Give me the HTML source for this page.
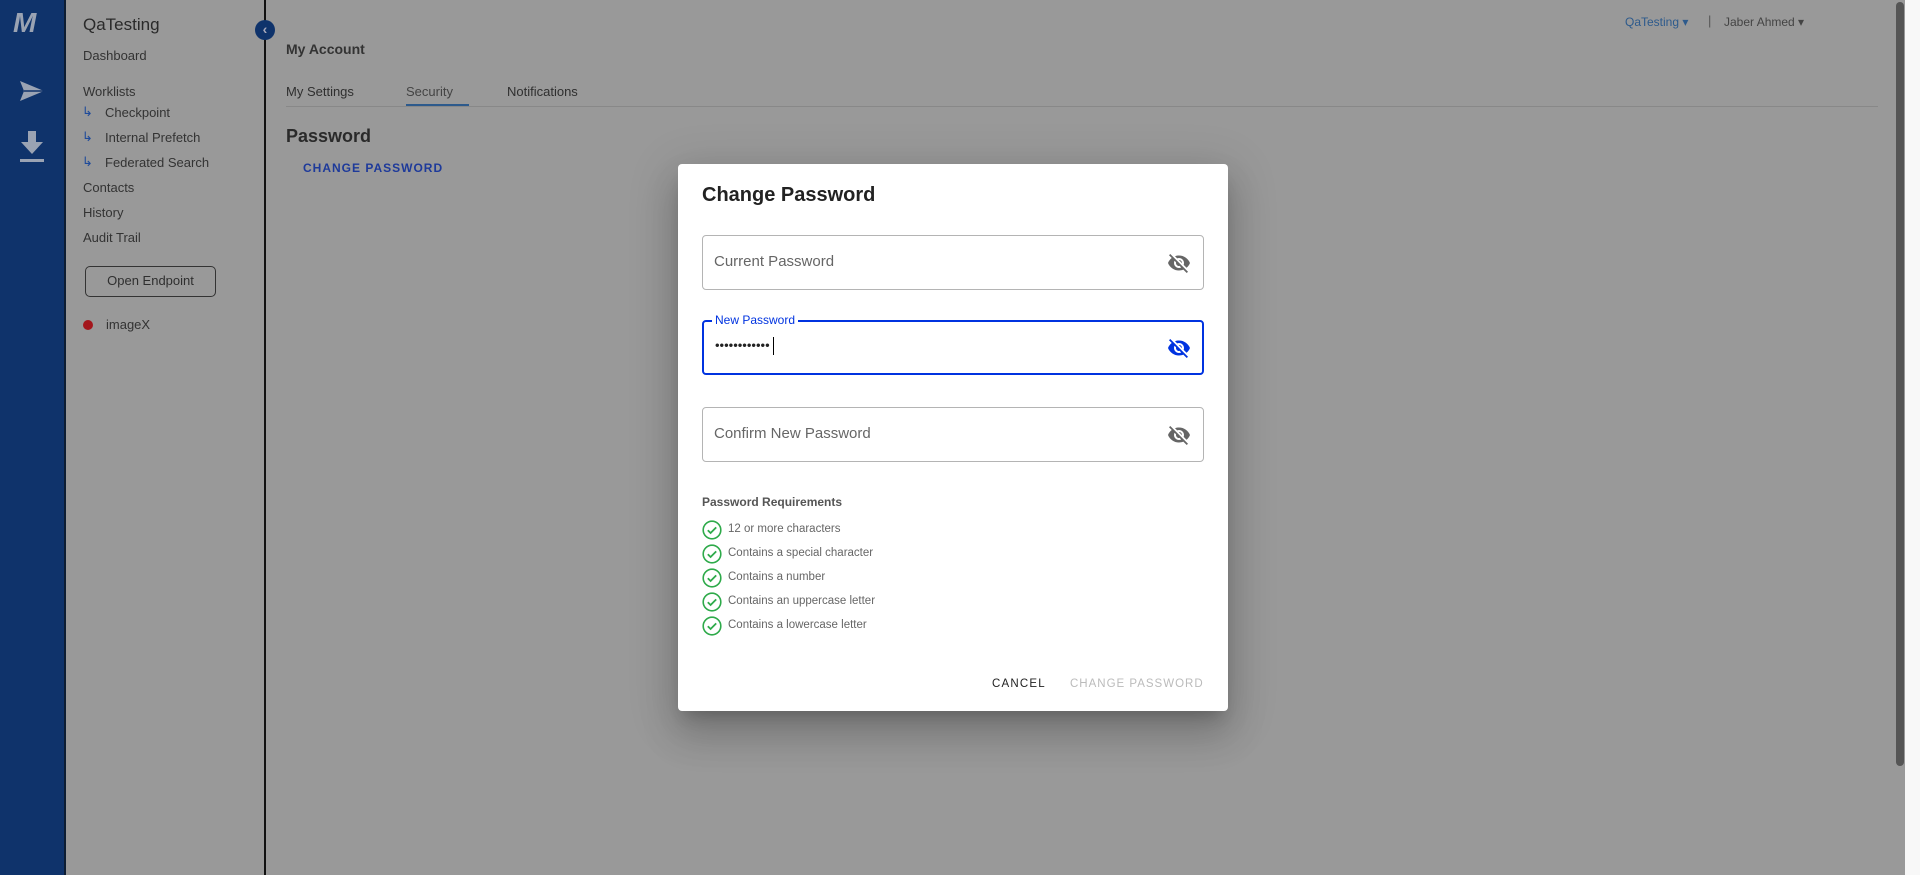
<!DOCTYPE html>
<html><head><meta charset="utf-8"><style>
*{margin:0;padding:0;box-sizing:border-box}
body{width:1920px;height:875px;overflow:hidden;background:#999;font-family:"Liberation Sans",sans-serif;position:relative}
.a{position:absolute;white-space:nowrap}
.nav{left:0;top:0;width:64px;height:875px;background:#0f336b}
.side{left:64px;top:0;width:202px;height:875px;background:#999;border-left:2px solid #0d1d33;border-right:2px solid #111}
.s{font-size:13px;color:#333;left:83px}
.sub{left:105px}
.arr{left:82px;color:#1e4a9a;font-size:13px}
.modal{left:678px;top:164px;width:550px;height:547px;background:#fff;border-radius:4px;box-shadow:0 11px 15px -7px rgba(0,0,0,.2),0 24px 38px 3px rgba(0,0,0,.14),0 9px 46px 8px rgba(0,0,0,.12)}
.f{left:24px;width:502px;height:55px;border:1px solid #b4b4b4;border-radius:4px}
.lab{left:11px;top:17px;font-size:15px;color:#666}
.eye{position:absolute;right:12px;top:15px;width:24px;height:24px}
.req{left:50px;font-size:11.5px;color:#666}
.chk{left:24px;width:20px;height:20px}
</style></head><body>
<div class="a nav"></div>
<div class="a" style="left:13px;top:7px;font-size:28px;font-weight:bold;font-style:italic;color:#9aa3b3;letter-spacing:-2px">M</div>
<svg class="a" style="left:19px;top:80px" width="26" height="22" viewBox="0 0 26 22"><path d="M1 1 L25 11 L1 21 L5 11 Z" fill="#9aa3b3"/><path d="M5 11h20" stroke="#0f336b" stroke-width="1.5"/></svg>
<svg class="a" style="left:19px;top:131px" width="26" height="32" viewBox="0 0 26 32"><path d="M9 0h8v11h7L13 23 2 11h7z" fill="#9aa3b3"/><rect x="1" y="28" width="24" height="3" fill="#9aa3b3"/></svg>
<div class="a side"></div>
<div class="a" style="left:83px;top:15px;font-size:17px;color:#2a2a2a">QaTesting</div>
<div class="a s" style="top:48px">Dashboard</div>
<div class="a s" style="top:84px">Worklists</div>
<div class="a arr" style="top:104px">↳</div><div class="a s sub" style="top:105px">Checkpoint</div>
<div class="a arr" style="top:129px">↳</div><div class="a s sub" style="top:130px">Internal Prefetch</div>
<div class="a arr" style="top:154px">↳</div><div class="a s sub" style="top:155px">Federated Search</div>
<div class="a s" style="top:180px">Contacts</div>
<div class="a s" style="top:205px">History</div>
<div class="a s" style="top:230px">Audit Trail</div>
<div class="a" style="left:85px;top:266px;width:131px;height:31px;border:1.5px solid #333;border-radius:5px;font-size:13px;color:#2f2f2f;text-align:center;line-height:28px">Open Endpoint</div>
<div class="a" style="left:83px;top:320px;width:10px;height:10px;border-radius:50%;background:#a3161c"></div>
<div class="a s" style="left:106px;top:317px">imageX</div>
<div class="a" style="left:255px;top:20px;width:20px;height:20px;border-radius:50%;background:#0f336b;color:#aab;font-size:14px;text-align:center;line-height:19px;font-weight:bold">‹</div>
<div class="a" style="left:286px;top:41px;font-size:14px;font-weight:bold;color:#333">My Account</div>
<div class="a" style="left:286px;top:84px;font-size:13px;color:#2f2f2f">My Settings</div>
<div class="a" style="left:406px;top:84px;font-size:13px;color:#444">Security</div>
<div class="a" style="left:507px;top:84px;font-size:13px;color:#2f2f2f">Notifications</div>
<div class="a" style="left:286px;top:106px;width:1592px;height:1px;background:#888"></div>
<div class="a" style="left:406px;top:104px;width:63px;height:2px;background:#2d5a8c"></div>
<div class="a" style="left:286px;top:126px;font-size:18px;font-weight:bold;color:#2a2a2a">Password</div>
<div class="a" style="left:303px;top:161px;font-size:12px;font-weight:bold;color:#1e3a9a;letter-spacing:1px">CHANGE PASSWORD</div>
<div class="a" style="left:1625px;top:15px;font-size:12px;color:#2d5a8c">QaTesting ▾</div>
<div class="a" style="left:1708px;top:13px;font-size:13px;color:#555">|</div>
<div class="a" style="left:1724px;top:15px;font-size:12px;color:#444">Jaber Ahmed ▾</div>
<div class="a" style="left:1896px;top:2px;width:8px;height:764px;background:#555;border-radius:4px"></div>
<div class="a" style="left:1905px;top:0;width:15px;height:875px;background:#f8f8f8"></div>

<div class="a modal">
<div class="a" style="left:24px;top:20px;font-size:20px;font-weight:bold;color:#222">Change Password</div>
<div class="a f" style="top:71px"><div class="a lab">Current Password</div>
<svg class="eye" viewBox="0 0 24 24"><path fill="#666" d="M12 7c2.76 0 5 2.24 5 5 0 .65-.13 1.26-.36 1.830l2.92 2.92c1.51-1.26 2.7-2.89 3.43-4.75-1.73-4.39-6-7.5-11-7.5-1.4 0-2.74.25-3.98.7l2.16 2.16C10.74 7.13 11.35 7 12 7zM2 4.27l2.28 2.28.46.46C3.08 8.3 1.78 10.02 1 12c1.73 4.39 6 7.5 11 7.5 1.55 0 3.03-.3 4.38-.84l.42.42L19.73 22 21 20.73 3.27 3 2 4.27zM7.53 9.8l1.55 1.55c-.05.21-.08.43-.08.65 0 1.66 1.34 3 3 3 .22 0 .44-.03.65-.08l1.55 1.55c-.67.33-1.41.53-2.2.53-2.76 0-5-2.24-5-5 0-.79.2-1.53.53-2.2zm4.31-.78l3.15 3.15.02-.16c0-1.66-1.34-3-3-3l-.17.01z"/></svg></div>
<div class="a f" style="top:156px;border:2px solid #0033e0">
<div class="a" style="left:8px;top:-9px;background:#fff;padding:0 3px;font-size:12px;color:#0033e0">New Password</div>
<div class="a" style="left:11px;top:15px;font-size:13px;color:#222;letter-spacing:0">••••••••••••<span style="display:inline-block;width:1px;height:18px;background:#000;vertical-align:middle;margin-left:3px"></span></div>
<svg class="eye" style="right:11px;top:14px" viewBox="0 0 24 24"><path fill="#0033e0" d="M12 7c2.76 0 5 2.24 5 5 0 .65-.13 1.26-.36 1.83l2.92 2.92c1.51-1.26 2.7-2.89 3.43-4.75-1.73-4.39-6-7.5-11-7.5-1.4 0-2.74.25-3.98.7l2.16 2.16C10.74 7.13 11.35 7 12 7zM2 4.27l2.28 2.28.46.46C3.08 8.3 1.78 10.02 1 12c1.73 4.39 6 7.5 11 7.5 1.55 0 3.03-.3 4.38-.84l.42.42L19.73 22 21 20.73 3.27 3 2 4.27zM7.53 9.8l1.55 1.55c-.05.21-.08.43-.08.65 0 1.66 1.34 3 3 3 .22 0 .44-.03.65-.08l1.55 1.55c-.67.33-1.41.53-2.2.53-2.76 0-5-2.24-5-5 0-.79.2-1.53.53-2.2zm4.31-.78l3.15 3.15.02-.16c0-1.66-1.34-3-3-3l-.17.01z"/></svg></div>
<div class="a f" style="top:243px"><div class="a lab">Confirm New Password</div>
<svg class="eye" viewBox="0 0 24 24"><path fill="#666" d="M12 7c2.76 0 5 2.24 5 5 0 .65-.13 1.26-.36 1.83l2.92 2.92c1.51-1.26 2.7-2.89 3.43-4.75-1.73-4.39-6-7.5-11-7.5-1.4 0-2.74.25-3.98.7l2.16 2.16C10.74 7.13 11.35 7 12 7zM2 4.27l2.28 2.28.46.46C3.08 8.3 1.78 10.02 1 12c1.73 4.39 6 7.5 11 7.5 1.55 0 3.03-.3 4.38-.84l.42.42L19.73 22 21 20.73 3.27 3 2 4.27zM7.53 9.8l1.55 1.55c-.05.21-.08.43-.08.65 0 1.66 1.34 3 3 3 .22 0 .44-.03.65-.08l1.55 1.55c-.67.33-1.41.53-2.2.53-2.76 0-5-2.24-5-5 0-.79.2-1.53.53-2.2zm4.31-.78l3.15 3.15.02-.16c0-1.66-1.34-3-3-3l-.17.01z"/></svg></div>
<div class="a" style="left:24px;top:331px;font-size:12px;font-weight:bold;color:#555">Password Requirements</div>
<svg class="a chk" style="top:356px" viewBox="0 0 20 20"><circle cx="10" cy="10" r="8.8" fill="none" stroke="#2eaa4a" stroke-width="1.6"/><path d="M5.8 10.2l2.8 2.8 5.6-5.6" fill="none" stroke="#2eaa4a" stroke-width="1.8"/></svg>
<div class="a req" style="top:359px">12 or more characters</div>
<svg class="a chk" style="top:380px" viewBox="0 0 20 20"><circle cx="10" cy="10" r="8.8" fill="none" stroke="#2eaa4a" stroke-width="1.6"/><path d="M5.8 10.2l2.8 2.8 5.6-5.6" fill="none" stroke="#2eaa4a" stroke-width="1.8"/></svg>
<div class="a req" style="top:383px">Contains a special character</div>
<svg class="a chk" style="top:404px" viewBox="0 0 20 20"><circle cx="10" cy="10" r="8.8" fill="none" stroke="#2eaa4a" stroke-width="1.6"/><path d="M5.8 10.2l2.8 2.8 5.6-5.6" fill="none" stroke="#2eaa4a" stroke-width="1.8"/></svg>
<div class="a req" style="top:407px">Contains a number</div>
<svg class="a chk" style="top:428px" viewBox="0 0 20 20"><circle cx="10" cy="10" r="8.8" fill="none" stroke="#2eaa4a" stroke-width="1.6"/><path d="M5.8 10.2l2.8 2.8 5.6-5.6" fill="none" stroke="#2eaa4a" stroke-width="1.8"/></svg>
<div class="a req" style="top:431px">Contains an uppercase letter</div>
<svg class="a chk" style="top:452px" viewBox="0 0 20 20"><circle cx="10" cy="10" r="8.8" fill="none" stroke="#2eaa4a" stroke-width="1.6"/><path d="M5.8 10.2l2.8 2.8 5.6-5.6" fill="none" stroke="#2eaa4a" stroke-width="1.8"/></svg>
<div class="a req" style="top:455px">Contains a lowercase letter</div>
<div class="a" style="left:314px;top:514px;font-size:11.5px;color:#222;letter-spacing:1.2px">CANCEL</div>
<div class="a" style="left:392px;top:514px;font-size:11.5px;color:#bbb;letter-spacing:1px">CHANGE PASSWORD</div>
</div>
</body></html>
